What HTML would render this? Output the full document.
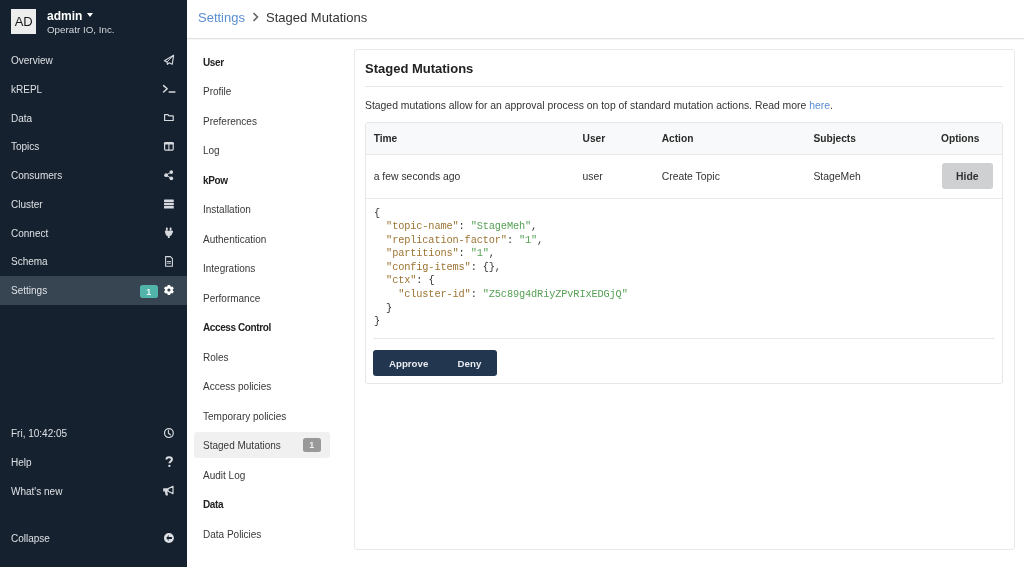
<!DOCTYPE html>
<html><head><meta charset="utf-8">
<style>
*{box-sizing:border-box;margin:0;padding:0}
html,body{width:1024px;height:567px;overflow:hidden;background:#fff;will-change:transform;font-family:"Liberation Sans",sans-serif;color:#333}
.abs{position:absolute}
#sb{position:absolute;left:0;top:0;width:187px;height:567px;background:#15212f}
.av{position:absolute;left:11px;top:9px;width:25px;height:25px;background:#ededed;color:#1a1a1a;font-size:13px;line-height:25px;text-align:center;letter-spacing:-0.3px}
.uname{position:absolute;left:47px;top:6.8px;font-size:12px;font-weight:bold;color:#fff;line-height:18px}
.caret{position:absolute;left:86.5px;top:12.8px;width:0;height:0;border-left:3.9px solid transparent;border-right:3.9px solid transparent;border-top:4.6px solid #fff}
.org{position:absolute;left:47px;top:22.6px;font-size:9.8px;color:#d5d9de;line-height:14px}
.nav{position:absolute;left:0;width:187px;height:28.75px;line-height:29px;font-size:10px;color:#dde0e4;padding-left:11px}
.nav.act{background:#374451}
.ic{position:absolute;overflow:visible}
.badge{position:absolute;background:#52b3aa;color:#e6f5f3;font-size:9px;font-weight:bold;text-align:center;border-radius:2.5px}
#hdr{position:absolute;left:187px;top:0;width:837px;height:39px;border-bottom:1px solid #e2e2e2;box-shadow:0 1px 1px rgba(0,0,0,0.035)}
.bc{position:absolute;top:8.8px;font-size:13px;line-height:18px}
.sm{position:absolute;left:203px;font-size:10px;color:#383838;line-height:14px;margin-top:0.8px}
.sm.b{font-weight:bold;color:#222;letter-spacing:-0.4px}
#card{position:absolute;left:354px;top:49px;width:661px;height:501px;border:1px solid #e9e9e9;border-radius:3px}
.mono{font-family:"Liberation Mono",monospace}
.th{position:absolute;top:133px;font-size:10.2px;font-weight:bold;color:#2a2a2a;line-height:12px}
.td{position:absolute;top:171.1px;font-size:10.4px;color:#333;line-height:12px}
.k{color:#9c7433}.s{color:#56a056}
.btx{position:absolute;top:358px;font-size:9.7px;font-weight:bold;color:#e8ebef;line-height:12px}
</style></head><body>
<div id="sb">
  <div class="av">AD</div>
  <div class="uname">admin</div>
  <div class="caret"></div>
  <div class="org">Operatr IO, Inc.</div>

  <div class="nav" style="top:46px">Overview</div>
  <div class="nav" style="top:74.75px">kREPL</div>
  <div class="nav" style="top:103.5px">Data</div>
  <div class="nav" style="top:132.25px">Topics</div>
  <div class="nav" style="top:161px">Consumers</div>
  <div class="nav" style="top:189.75px">Cluster</div>
  <div class="nav" style="top:218.5px">Connect</div>
  <div class="nav" style="top:247.25px">Schema</div>
  <div class="nav act" style="top:276px;height:29px">Settings</div>
  <div class="badge" style="left:140px;top:284.5px;width:17.5px;height:13.7px;line-height:14px">1</div>

  <div class="nav" style="top:418.6px">Fri, 10:42:05</div>
  <div class="nav" style="top:448.1px">Help</div>
  <div class="nav" style="top:477px">What's new</div>
  <div class="nav" style="top:524.1px">Collapse</div>
<svg class="abs" style="left:0;top:0" width="187" height="567" viewBox="0 0 187 567">
<g fill="none" stroke="#d6d9de" stroke-linejoin="round" stroke-linecap="round">
 <!-- paper plane -->
 <path d="M173.6 55.3 L164.4 60.7 L167 61.9 L167.4 64.4 L169 62.8 L172.3 64.2 Z" stroke-width="1.15"/>
 <path d="M173.3 55.6 L167.2 61.8" stroke-width="0.9"/>
 <!-- terminal -->
 <path d="M163.6 85.6 L167.2 88.8 L163.6 92" stroke-width="1.5"/>
 <path d="M169.2 92.1 L174.9 92.1" stroke-width="1.5"/>
 <!-- folder -->
 <path d="M164.6 114.6 L168 114.6 L169 115.8 L173.2 115.8 L173.2 120.5 L164.6 120.5 Z" stroke-width="1.2"/>
 <!-- columns -->
 <rect x="164.6" y="142.7" width="8.6" height="7.4" rx="0.8" stroke-width="1.2"/>
 <path d="M168.9 143.5 L168.9 150" stroke-width="1.1"/>
 <path d="M164.6 143.6 L173.2 143.6" stroke-width="1.6"/>
 <!-- share -->
 <path d="M166.1 175.2 L171.3 172.1 M166.1 175.2 L171.3 178.3" stroke-width="1"/>
 <!-- clock -->
 <circle cx="168.9" cy="433.1" r="4.4" stroke-width="1.2"/>
 <path d="M168.4 430.4 L168.4 433.2 L170.4 434.8" stroke-width="1.1"/>
 <!-- megaphone cone -->
 <path d="M168.2 488.6 L173 486.3 L173 493.6 L168.2 491.3" stroke-width="1.2"/>
 <!-- file -->
 <path d="M165.6 256.6 L170.4 256.6 L172.4 258.6 L172.4 266.3 L165.6 266.3 Z" stroke-width="1.1"/>
 <path d="M167.2 261.5 L170.6 261.5 M167.2 263.2 L170.6 263.2" stroke-width="0.9"/>
 <!-- question -->
 <path d="M166.4 459.6 C166.4 457.8 167.8 457.2 169.1 457.2 C170.8 457.2 171.9 458.2 171.9 459.5 C171.9 461.4 169.4 461.5 169.4 463.3" stroke-width="2" stroke="#dde0e4" stroke-linecap="butt"/>
</g>
<g fill="#d6d9de">
 <circle cx="166.1" cy="175.2" r="1.85"/><circle cx="171.3" cy="172.1" r="1.85"/><circle cx="171.3" cy="178.3" r="1.85"/>
 <rect x="164" y="199.4" width="9.8" height="2.6" rx="0.6"/>
 <rect x="164" y="202.7" width="9.8" height="2.6" rx="0.6"/>
 <rect x="164" y="206" width="9.8" height="2.6" rx="0.6"/>
 <rect x="165.9" y="227.4" width="1.8" height="3.4" rx="0.5"/>
 <rect x="169.7" y="227.4" width="1.8" height="3.4" rx="0.5"/>
 <path d="M164.9 230.8 L173 230.8 L173 232 L171.4 235.3 L169.6 236.2 L169.6 237.9 L167.8 237.9 L167.8 236.2 L166 235.3 L164.9 232 Z"/>
 <circle cx="169.4" cy="465.9" r="1.15" fill="#dde0e4"/>
 <path d="M163.2 488.3 L168.6 488.3 L168.6 491.6 L167.3 491.6 L167.9 494.4 Q168 495.6 167 495.6 L166.2 495.6 Q165.6 495.6 165.5 494.8 L164.9 491.6 L163.2 491.6 Z"/>
 <circle cx="168.9" cy="538.05" r="4.95" fill="#dde0e4"/>
</g>
<path fill="#15212f" d="M166.2 538.05 L168.7 535.3 L169.1 535.7 L168.2 537.1 L171.9 537.1 L171.9 539 L168.2 539 L169.1 540.4 L168.7 540.8 Z"/>
<g fill="#fff"><circle cx="168.9" cy="290" r="3.9"/>
<rect x="167.6" y="285" width="2.6" height="10" rx="0.6"/>
<rect x="167.6" y="285" width="2.6" height="10" rx="0.6" transform="rotate(60 168.9 290)"/>
<rect x="167.6" y="285" width="2.6" height="10" rx="0.6" transform="rotate(120 168.9 290)"/>
<circle cx="168.9" cy="290" r="1.6" fill="#374451"/></g>
</svg>
</div>

<div id="hdr"></div>
<div class="bc" style="left:198px;color:#5a8fd1">Settings</div>
<div class="bc" style="left:266px;color:#333">Staged Mutations</div>
<svg class="ic" style="left:252px;top:12px" width="8" height="10" viewBox="0 0 8 10"><path d="M1.5 1 L5.5 5 L1.5 9" fill="none" stroke="#666" stroke-width="1.6"/></svg>

<div class="sm b" style="top:55px">User</div>
<div class="sm" style="top:84.5px">Profile</div>
<div class="sm" style="top:114px">Preferences</div>
<div class="sm" style="top:143.5px">Log</div>
<div class="sm b" style="top:173px">kPow</div>
<div class="sm" style="top:202.5px">Installation</div>
<div class="sm" style="top:232px">Authentication</div>
<div class="sm" style="top:261.5px">Integrations</div>
<div class="sm" style="top:291px">Performance</div>
<div class="sm b" style="top:320.5px">Access Control</div>
<div class="sm" style="top:350px">Roles</div>
<div class="sm" style="top:379.5px">Access policies</div>
<div class="sm" style="top:409px">Temporary policies</div>
<div class="abs" style="left:194px;top:432px;width:136px;height:25.5px;background:#f0f0f0;border-radius:3px"></div>
<div class="sm" style="top:438.5px">Staged Mutations</div>
<div class="abs" style="left:303px;top:438.3px;width:17.5px;height:13.6px;background:#999;border-radius:2.5px;color:#eee;font-size:9px;font-weight:bold;text-align:center;line-height:15px">1</div>
<div class="sm" style="top:468px">Audit Log</div>
<div class="sm b" style="top:497.5px">Data</div>
<div class="sm" style="top:527px">Data Policies</div>

<div id="card"></div>
<div class="abs" style="left:365px;top:61px;font-size:13px;font-weight:bold;line-height:15px;color:#222">Staged Mutations</div>
<div class="abs" style="left:365px;top:86px;width:638px;height:1px;background:#e6e6e6"></div>
<div class="abs" style="left:365px;top:99px;font-size:10.4px;line-height:13px;color:#333">Staged mutations allow for an approval process on top of standard mutation actions. Read more <span style="color:#5a8fd1">here</span>.</div>
<div class="abs" style="left:365px;top:122px;width:638px;height:262px;border:1px solid #e6e6e6;border-radius:3px;overflow:hidden">
  <div class="abs" style="left:0;top:0;width:636px;height:32px;background:#f8f9fa;border-bottom:1px solid #e8eaec"></div>
  <div class="abs" style="left:0;top:75px;width:636px;height:1px;background:#e8eaec"></div>
</div>
<div class="th" style="left:373.7px">Time</div>
<div class="th" style="left:582.6px">User</div>
<div class="th" style="left:661.7px">Action</div>
<div class="th" style="left:813.4px">Subjects</div>
<div class="th" style="left:941px">Options</div>
<div class="td" style="left:373.7px">a few seconds ago</div>
<div class="td" style="left:582.6px">user</div>
<div class="td" style="left:661.7px">Create Topic</div>
<div class="td" style="left:813.4px">StageMeh</div>
<div class="abs" style="left:941.7px;top:163.4px;width:51.3px;height:25.2px;background:#cfd0d2;border-radius:3px;font-size:10.4px;font-weight:bold;color:#333;text-align:center;line-height:27px">Hide</div>
<pre class="abs mono" style="left:374px;top:206.5px;font-size:10.3px;letter-spacing:-0.14px;line-height:13.6px;color:#333">{
  <span class="k">"topic-name"</span>: <span class="s">"StageMeh"</span>,
  <span class="k">"replication-factor"</span>: <span class="s">"1"</span>,
  <span class="k">"partitions"</span>: <span class="s">"1"</span>,
  <span class="k">"config-items"</span>: {},
  <span class="k">"ctx"</span>: {
    <span class="k">"cluster-id"</span>: <span class="s">"Z5c89g4dRiyZPvRIxEDGjQ"</span>
  }
}</pre>
<div class="abs" style="left:373px;top:338px;width:622px;height:1px;background:#e8e8e8"></div>
<div class="abs" style="left:373px;top:350px;width:124px;height:26px;background:#22364f;border-radius:3px"></div>
<div class="btx" style="left:389px">Approve</div>
<div class="btx" style="left:457.6px">Deny</div>
</body></html>
